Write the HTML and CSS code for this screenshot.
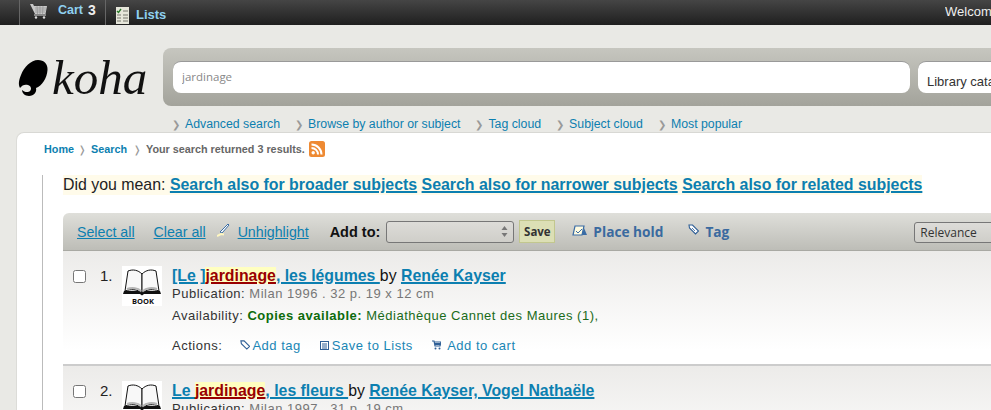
FILE: index.html
```html
<!DOCTYPE html>
<html lang="en">
<head>
  <meta charset="UTF-8">
  <title>Koha online catalog</title>
  <link rel="stylesheet" href="styles.css">
</head>
<body>

  <div class="topbar">
    <div class="cart-tab">
      <svg class="cart-big" width="18" height="16" viewBox="0 0 18 16">
        <path d="M0 1h3l1 2h13l-1.500 8H5z" fill="#c9c9c9"/>
        <path d="M5 5h11M5 7h11M5 9h10M7 3l.5 8M10 3v8M13 3l-.5 8" stroke="#8a8a8a" stroke-width=".6" fill="none"/>
        <path d="M4 12h12" stroke="#ddd" stroke-width="1"/>
        <circle cx="6" cy="14.500" r="1.200" fill="#ddd"/>
        <circle cx="14" cy="14.500" r="1.200" fill="#ddd"/>
      </svg>
      <a class="top-link" href="#">Cart</a>
      <span class="cart-count">3</span>
    </div>
    <div class="lists-tab">
      <svg width="13" height="17" viewBox="0 0 13 17">
        <rect width="13" height="17" fill="#e6e6da"/>
        <path d="M1 4l1.500 1.500L5 2" stroke="#2a7a2a" stroke-width="1.400" fill="none"/>
        <path d="M7 4h5M1 8h4M7 8h5M1 11h4M7 11h5M1 14h4M7 14h5" stroke="#77776c" stroke-width="1.200"/>
      </svg>
      <a class="top-link" href="#">Lists</a>
    </div>
    <div class="welcome">Welcome</div>
  </div>

  <div class="masthead">
    <div class="logo">
      <svg class="logo-mark" width="31" height="37" viewBox="0 0 31 37">
        <path d="M20 0C26 0 30 4 29.500 10C29 18 24 26 18 28C19 32 16 36 11 36C7 36 4 33 4 30C6 32 10 33 12 31C14 29 13 26 10 25C7 24 4 25 2 28C0 24 1 20 3 15C6 7 13 0 20 0z" fill="#000"/>
      </svg>
      <span class="logo-word">koha</span>
    </div>
    <form class="search-box">
      <input class="search-input" type="text" value="jardinage">
      <div class="search-scope">Library catalog</div>
    </form>
  </div>

  <ul class="more-search">
    <li><a href="#">Advanced search</a></li>
    <li><a href="#">Browse by author or subject</a></li>
    <li><a href="#">Tag cloud</a></li>
    <li><a href="#">Subject cloud</a></li>
    <li><a href="#">Most popular</a></li>
  </ul>

  <div class="main">
    <div class="breadcrumbs">
      <a href="#">Home</a><span class="crumb-sep">❭</span>
      <a href="#">Search</a><span class="crumb-sep">❭</span>
      <span class="crumb-text">Your search returned 3 results.</span>
      <svg class="rss" width="16" height="16" viewBox="0 0 16 16">
        <rect width="16" height="16" rx="2.500" fill="#ee8a33"/>
        <circle cx="4.200" cy="11.800" r="1.700" fill="#fff"/>
        <path d="M2.500 7a6.500 6.500 0 0 1 6.500 6.500M2.500 3.500a10 10 0 0 1 10 10" stroke="#fff" stroke-width="2" fill="none"/>
      </svg>
    </div>

    <div class="content">
      <div class="did-you-mean">
        Did you mean:
        <a href="#">Search also for broader subjects</a>
        <a href="#">Search also for narrower subjects</a>
        <a href="#">Search also for related subjects</a>
      </div>

      <div class="toolbar">
        <a class="tool-link select-all" href="#">Select all</a>
        <a class="tool-link clear-all" href="#">Clear all</a>
        <svg class="pen" width="14" height="14" viewBox="0 0 14 14">
          <path d="M3 9L11 1l1 1-7 8z" fill="#fff" stroke="#3b6ea5" stroke-width="1"/>
          <path d="M0 13l4-2 3 .5" stroke="#fff7c0" stroke-width="2" fill="none"/>
        </svg>
        <a class="tool-link" href="#">Unhighlight</a>
        <span class="add-to">Add to:</span>
        <div class="fake-select">
          <svg width="7" height="13" viewBox="0 0 7 13"><path d="M3.500 1L6.500 5H.5zM.5 8h6l-3 4z" fill="#777"/></svg>
        </div>
        <span class="save-btn">Save</span>
        <svg class="hold-icon" width="16" height="12" viewBox="0 0 16 12">
          <path d="M3 1h9l-2 9H1z" fill="#fffbe0" stroke="#3a6ca5" stroke-width="1.200"/>
          <path d="M4 6l2 2 4-4" stroke="#3a6ca5" fill="none"/>
          <path d="M12 3l3 7h-5z" fill="#3a6ca5"/>
        </svg>
        <a class="action-bold" href="#">Place hold</a>
        <svg class="tag-icon" width="11" height="11" viewBox="0 0 11 11">
          <path d="M1 1h3.500l6 6-3 3-6-6z" fill="#fff" stroke="#2f5f96" stroke-width="1.100"/>
          <path d="M4 4l3 3" stroke="#2f5f96" stroke-width=".8"/>
        </svg>
        <a class="action-bold" href="#">Tag</a>
        <div class="sort-select">Relevance</div>
      </div>

      <div class="result">
        <input class="pick" type="checkbox">
        <span class="num">1.</span>
        <svg class="book" width="40" height="40" viewBox="0 0 40 40">
          <rect width="40" height="40" fill="#fff"/>
          <path d="M2 25L1 28H18L20 29.500L22 28H39L38 25z" fill="#111"/>
          <path d="M20 8C16 4 11 3 6 5L3 25C9 23 15 23 20 27z" fill="#f8f8f8" stroke="#111"/>
          <path d="M20 8C24 4 29 3 34 5L37 25C31 23 25 23 20 27z" fill="#f8f8f8" stroke="#111"/>
          <path d="M5 23C10 21 16 22 19 25M35 23C30 21 24 22 21 25" stroke="#b5b5b5" stroke-width="2" fill="none"/>
          <text class="book-label" x="21" y="38" text-anchor="middle">BOOK</text>
        </svg>
        <div class="record">
          <div class="record-title"><a href="#">[Le ]<mark>jardinage</mark>, les légumes </a> by <a href="#">Renée Kayser</a></div>
          <div class="pub">Publication: <span>Milan 1996 . 32 p. 19 x 12 cm</span></div>
          <div class="avail">Availability: <b>Copies available:</b> <span>Médiathèque Cannet des Maures (1),</span></div>
          <div class="actions">
            <span class="actions-label">Actions:</span>
            <a class="act-tag" href="#">
              <svg width="10" height="10" viewBox="0 0 11 11"><path d="M1 1h3.500l6 6-3 3-6-6z" fill="#fff" stroke="#2f5f96" stroke-width="1.200"/></svg>
              Add tag</a>
            <a class="act-list" href="#">
              <svg width="9" height="9" viewBox="0 0 9 9"><rect x=".5" y=".5" width="8" height="8" fill="#fff" stroke="#2f5f96"/><path d="M2 3h5M2 5h5M2 7h5" stroke="#2f5f96"/></svg>
              Save to Lists</a>
            <a class="act-cart" href="#">
              <svg width="9" height="10" viewBox="0 0 9 10"><path d="M0 1h2l1 5h5l1-4H2.500" fill="none" stroke="#2f5f96" stroke-width="1.200"/><path d="M3 3h5v2H3z" fill="#2f5f96"/><circle cx="3.500" cy="8.500" r="1" fill="#2f5f96"/><circle cx="7.500" cy="8.500" r="1" fill="#2f5f96"/></svg>
              Add to cart</a>
          </div>
        </div>
      </div>

      <div class="result">
        <input class="pick" type="checkbox">
        <span class="num">2.</span>
        <svg class="book" width="40" height="40" viewBox="0 0 40 40">
          <rect width="40" height="40" fill="#fff"/>
          <path d="M2 25L1 28H18L20 29.500L22 28H39L38 25z" fill="#111"/>
          <path d="M20 8C16 4 11 3 6 5L3 25C9 23 15 23 20 27z" fill="#f8f8f8" stroke="#111"/>
          <path d="M20 8C24 4 29 3 34 5L37 25C31 23 25 23 20 27z" fill="#f8f8f8" stroke="#111"/>
          <path d="M5 23C10 21 16 22 19 25M35 23C30 21 24 22 21 25" stroke="#b5b5b5" stroke-width="2" fill="none"/>
          <text class="book-label" x="21" y="38" text-anchor="middle">BOOK</text>
        </svg>
        <div class="record">
          <div class="record-title"><a href="#">Le <mark>jardinage</mark>, les fleurs </a> by <a href="#">Renée Kayser, Vogel Nathaële</a></div>
          <div class="pub">Publication: <span>Milan 1997 . 31 p. 19 cm</span></div>
        </div>
      </div>
    </div>
  </div>

</body>
</html>
```

FILE: styles.css
```css
html, body {
  margin: 0;
  height: 410px;
  overflow: hidden;
}

body {
  width: 991px;
  background-color: #e9e9e5;
  font-family: "Liberation Sans", Arial, sans-serif;
  color: #222;
}

a {
  color: #0c7fb0;
}

/* top bar */
.topbar {
  display: flex;
  height: 25px;
  padding-left: 19px;
  background: linear-gradient(#454545, #1f1f1f);
}

.cart-tab {
  display: flex;
  align-items: flex-start;
  width: 87px;
  box-sizing: border-box;
  padding-left: 10px;
  border-left: 1px solid #666;
  border-right: 1px solid #666;
}

.cart-big {
  margin-top: 3px;
}

.top-link {
  font-size: 13px;
  font-weight: bold;
  color: #8fd0f0;
  text-decoration: none;
}

.cart-tab .top-link {
  margin: 3px 0 0 10px;
  font-size: 12.500px;
}

.cart-count {
  margin: 2px 0 0 5px;
  font-size: 14px;
  font-weight: bold;
  color: #eee;
}

.lists-tab {
  display: flex;
  align-items: flex-start;
  padding: 7px 0 0 10px;
}

.lists-tab .top-link {
  margin: 0 0 0 7px;
}

.welcome {
  margin: 4px 0 0 auto;
  width: 46px;
  overflow: hidden;
  white-space: nowrap;
  font-size: 13px;
  color: #eee;
}

/* logo and search */
.masthead {
  display: flex;
  margin-top: 23px;
  padding-left: 18px;
}

.logo {
  display: flex;
  flex: none;
  align-items: center;
  width: 145px;
  height: 58px;
}

.logo-mark {
  flex: none;
  margin-top: 2px;
}

.logo-word {
  margin: 2px 0 0 3px;
  font-family: "Liberation Serif", serif;
  font-style: italic;
  font-size: 49px;
  line-height: 48px;
  color: #111;
}

.search-box {
  display: flex;
  flex: none;
  gap: 8px;
  width: 900px;
  height: 58px;
  margin: 0;
  box-sizing: border-box;
  padding: 13px 0 0 10px;
  border-radius: 8px 0 0 8px;
  background: linear-gradient(#c6c6bf, #a3a39b);
}

.search-input {
  flex: none;
  width: 737px;
  height: 32px;
  box-sizing: border-box;
  padding: 0 9px 2px;
  border: 0;
  border-top: 1px solid #999;
  border-radius: 8px;
  background: #fff;
  font-family: "Open Sans", sans-serif;
  font-size: 11.500px;
  color: #888;
}

.search-scope {
  flex: none;
  width: 200px;
  height: 32px;
  box-sizing: border-box;
  padding: 12px 0 0 9px;
  border-top: 1px solid #999;
  border-radius: 8px;
  background: #fff;
  font-size: 13px;
  color: #333;
  white-space: nowrap;
}

.more-search {
  display: flex;
  gap: 15px;
  height: 26px;
  margin: 0;
  padding: 11px 0 0 172px;
  box-sizing: border-box;
  list-style-type: none;
  font-size: 12.300px;
}

.more-search li::before {
  content: "❯";
  display: inline-block;
  width: 13px;
  font-size: 10px;
  color: #999;
}

.more-search a {
  text-decoration: none;
}

/* main panel */
.main {
  width: 1000px;
  height: 300px;
  margin-left: 16px;
  border-top: 1px solid #d8d8d4;
  border-left: 1px solid #dcdcd8;
  border-radius: 8px 0 0 0;
  background-color: #fff;
}

.breadcrumbs {
  display: flex;
  align-items: center;
  height: 16px;
  padding: 8px 0 0 27px;
  font-size: 10.800px;
  font-weight: bold;
}

.breadcrumbs a {
  text-decoration: none;
}

.crumb-sep {
  width: 17px;
  padding-left: 4px;
  box-sizing: border-box;
  font-size: 10px;
  font-weight: normal;
  color: #999;
}

.breadcrumbs a + .crumb-sep + a + .crumb-sep {
  width: 19px;
  padding-left: 6px;
}

.crumb-text {
  color: #666;
}

.rss {
  margin-left: 4px;
}

.content {
  margin: 18px 0 0 25px;
  padding-left: 20px;
  border-left: 1px solid #bbb;
}

.did-you-mean {
  width: 859px;
  height: 20px;
  background-color: #fffbea;
  font-size: 15.900px;
  line-height: 19px;
  white-space: nowrap;
}

.did-you-mean a {
  font-weight: bold;
  text-decoration-thickness: 2px;
}

.toolbar {
  display: flex;
  align-items: center;
  width: 960px;
  height: 38px;
  margin-top: 18px;
  padding-left: 14px;
  box-sizing: border-box;
  border-bottom: 1px solid #a9a9a3;
  border-radius: 6px 0 0 0;
  background: linear-gradient(#dfdfda, #bdbdb7);
  font-size: 14.200px;
}

.tool-link {
  white-space: nowrap;
}

.clear-all {
  margin-left: 19px;
}

.pen {
  margin: -4px 7px 0 11px;
}

.add-to {
  margin-left: 21px;
  font-weight: bold;
  color: #111;
  font-size: 14.500px;
}

.fake-select {
  display: flex;
  flex: none;
  align-items: center;
  justify-content: flex-end;
  width: 128px;
  height: 22px;
  box-sizing: border-box;
  margin-left: 6px;
  padding-right: 5px;
  border: 1px solid #777;
  border-radius: 3px;
  background: linear-gradient(#dddcd8, #cfcec9);
}

.save-btn {
  display: flex;
  flex: none;
  align-items: center;
  justify-content: center;
  width: 36px;
  height: 23px;
  box-sizing: border-box;
  margin-left: 5px;
  border: 1px solid #c2c78e;
  background-color: #dcdfb5;
  font-family: "Open Sans", sans-serif;
  font-size: 11.500px;
  font-weight: bold;
  color: #333;
}

.hold-icon {
  flex: none;
  margin: -2px 5px 0 17px;
}

.tag-icon {
  flex: none;
  margin: -4px 6px 0 25px;
}

.action-bold {
  font-family: "Open Sans", sans-serif;
  font-size: 13.700px;
  font-weight: bold;
  color: #3a6a9f;
  text-decoration: none;
  white-space: nowrap;
}

.sort-select {
  flex: none;
  width: 100px;
  height: 21px;
  box-sizing: border-box;
  margin: 1px 0 0 185px;
  padding-left: 5px;
  border: 1px solid #777;
  border-radius: 3px;
  background: linear-gradient(#dddcd8, #cfcec9);
  font-family: "Open Sans", sans-serif;
  font-size: 12px;
  line-height: 19px;
  color: #333;
}

/* results */
.result {
  display: flex;
  align-items: flex-start;
  width: 960px;
  height: 115px;
  box-sizing: border-box;
  border-bottom: 2px solid #ccc;
  background: linear-gradient(#ecebe9, #fff 88%);
}

.pick {
  flex: none;
  width: 13px;
  height: 13px;
  margin: 19px 0 0 10px;
}

.num {
  flex: none;
  width: 22px;
  margin: 16px 0 0 14px;
  font-size: 15px;
  color: #222;
}

.book {
  flex: none;
  margin-top: 15px;
}

.book-label {
  font-family: "Open Sans", sans-serif;
  font-size: 7.500px;
  font-weight: bold;
  fill: #111;
}

.record {
  margin: 15px 0 0 10px;
  font-size: 13px;
  letter-spacing: .5px;
  color: #333;
  white-space: nowrap;
}

.record-title {
  height: 19px;
  font-size: 15.850px;
  line-height: 19px;
  letter-spacing: 0;
  color: #111;
}

.record-title a {
  font-weight: bold;
  text-decoration-thickness: 2px;
}

mark {
  background-color: #ffffc0;
  color: #990000;
  text-decoration: underline;
  text-decoration-thickness: 2px;
}

.pub {
  margin-top: 1px;
  line-height: 15px;
}

.pub span {
  color: #777;
}

.avail {
  margin-top: 7px;
  line-height: 15px;
  color: #333;
}

.avail b {
  color: #0c6b0c;
}

.avail span {
  color: #1a6b1a;
}

.actions {
  display: flex;
  margin-top: 15px;
  line-height: 15px;
  color: #333;
}

.actions-label {
  width: 68px;
}

.actions a {
  margin-right: 19px;
  color: #1a86b5;
  text-decoration: none;
}

.actions svg {
  margin-right: -1px;
}

.actions .act-cart svg {
  margin-right: 3px;
}
```
